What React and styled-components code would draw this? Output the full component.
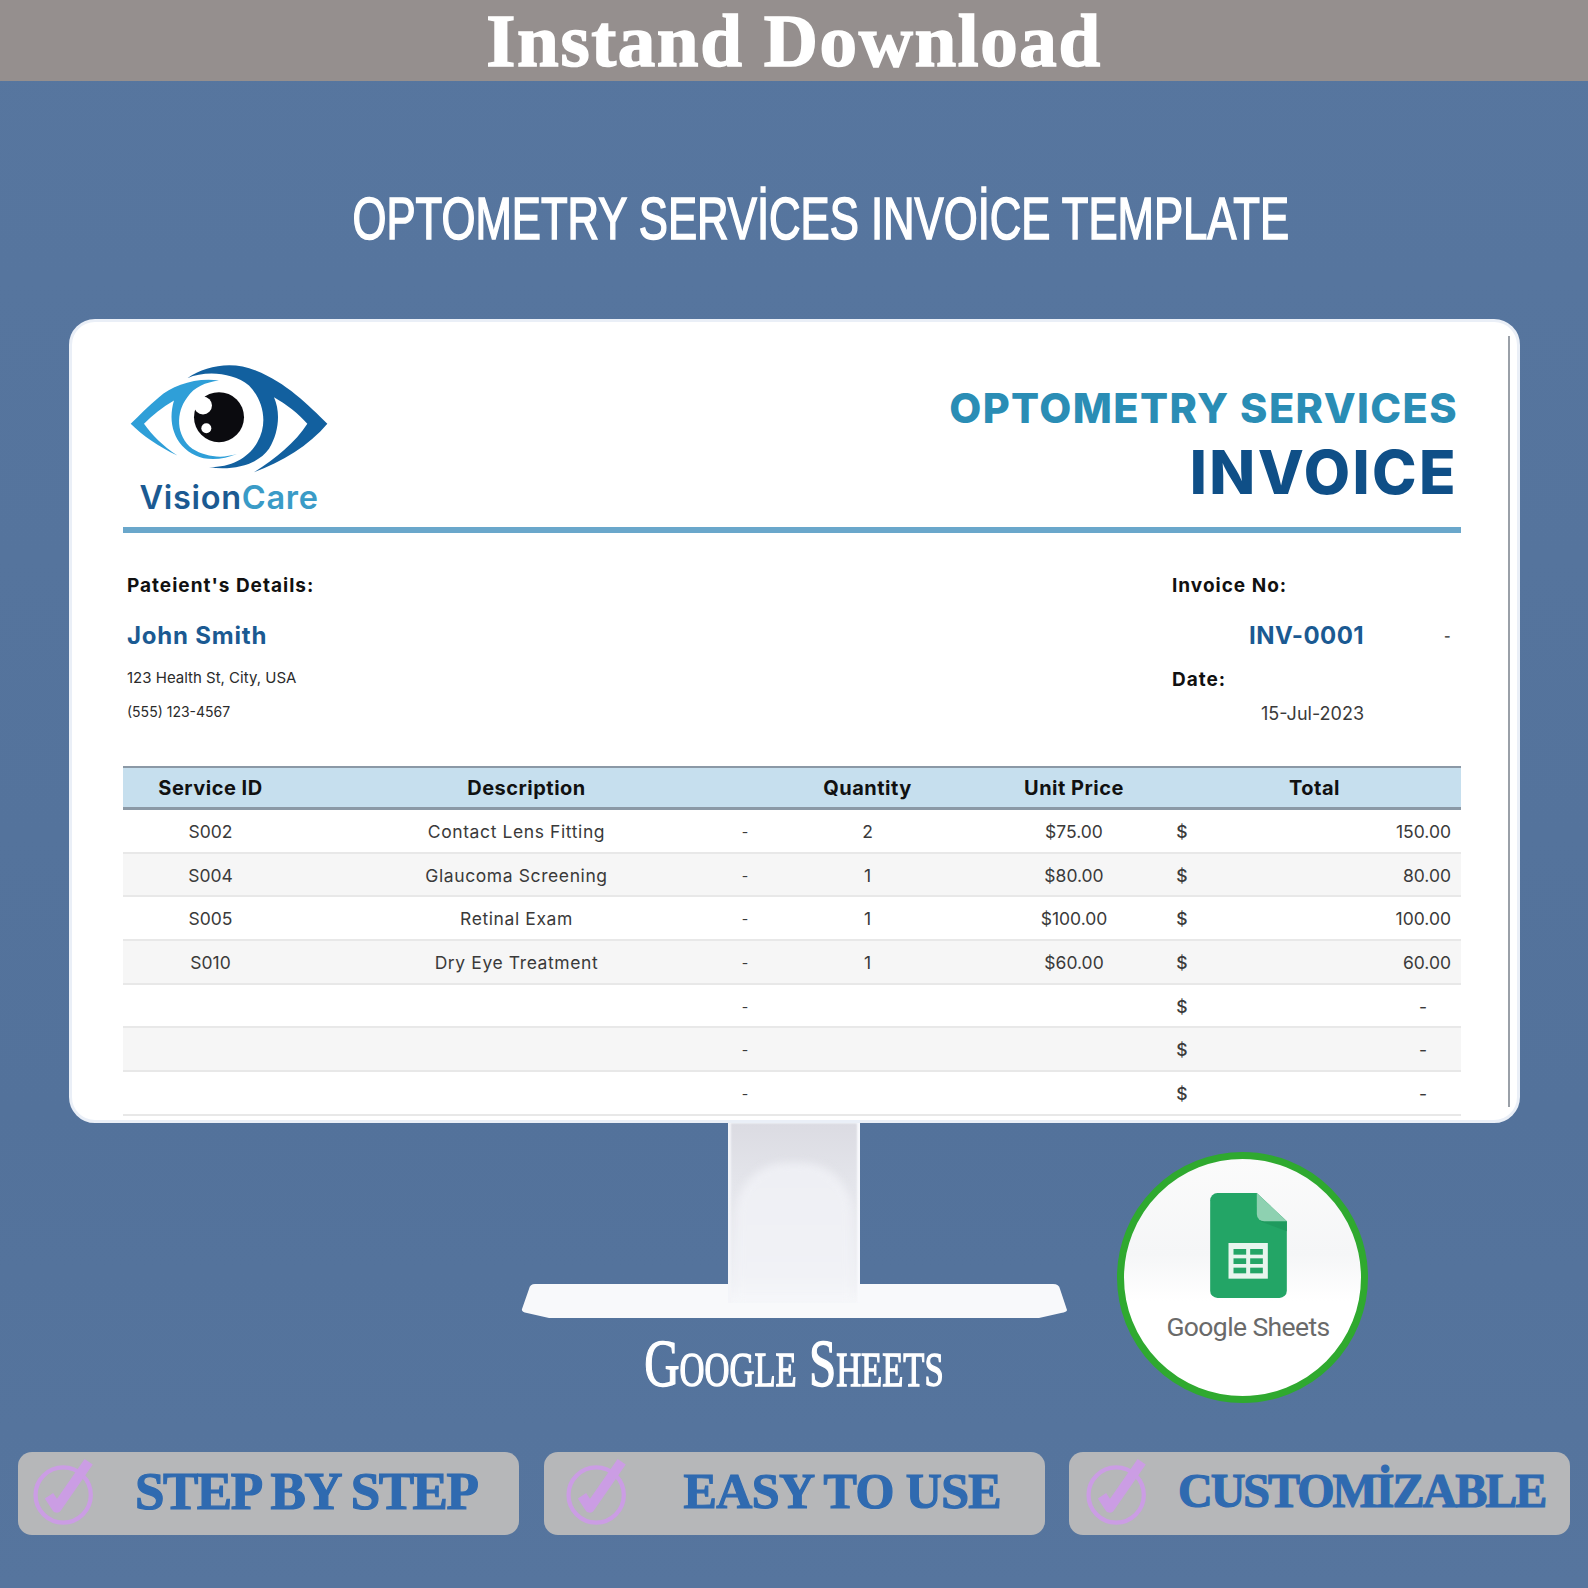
import styled, { createGlobalStyle } from 'styled-components';

const Global = createGlobalStyle`
    html, body {
        margin: 0;
        padding: 0;
    }
    body {
        width: 1588px;
        background: #56759e;
        font-family: "Inter", "Liberation Sans", sans-serif;
    }
`;

const Page = styled.div`
    position: relative;
    width: 1588px;
    height: 1588px;
    overflow: hidden;
    background: linear-gradient(180deg, #57769f 0%, #53729b 70%, #56759e 100%);
`;

const TopBar = styled.div`
    height: 81px;
    background: #958f8e;
    display: flex;
    justify-content: center;
    align-items: center;
`;

const Headline = styled.h1`
    margin: 0;
    color: #fff;
    font-family: "Liberation Serif", serif;
    font-weight: 700;
    font-size: 75px;
    line-height: 81px;
    letter-spacing: 1.6px;
    -webkit-text-stroke: 1.5px #fff;
`;

const TitleRow = styled.div`
    height: 238px;
    box-sizing: border-box;
    padding: 108px 0 0 53px;
    display: flex;
    justify-content: center;
`;

const Title = styled.h2`
    margin: 0;
    height: 60px;
    line-height: 60px;
    color: #fff;
    font-family: "Liberation Sans", sans-serif;
    font-weight: 400;
    font-size: 59px;
    white-space: nowrap;
    transform: scaleX(0.74);
    -webkit-text-stroke: 1.6px #fff;
`;

const Screen = styled.div`
    position: relative;
    box-sizing: border-box;
    margin-left: 69px;
    width: 1451px;
    height: 804px;
    padding: 40px 0 0 51px;
    background: #fff;
    border: 3px solid #eaeff7;
    border-radius: 26px;

    &::after {
        content: "";
        position: absolute;
        top: 14px;
        bottom: 13px;
        right: 7px;
        width: 2px;
        background: #9aa0a8;
    }
`;

const Sheet = styled.div`
    width: 1338px;
`;

const Header = styled.div`
    height: 165px;
    display: flex;
    justify-content: space-between;
    border-bottom: 6px solid #6aa7cb;
`;

const Brand = styled.div`
    width: 210px;
    padding-left: 1px;
    display: flex;
    flex-direction: column;
    align-items: center;
`;

const BrandName = styled.div`
    margin-top: 3px;
    font-size: 32.5px;
    line-height: 42px;
    font-weight: 600;
    letter-spacing: 0.7px;
    color: #1b5a92;
    white-space: nowrap;

    span {
        color: #3a9bc7;
    }
`;

const Heading = styled.div`
    padding: 22px 3px 0 0;
    text-align: right;
`;

const HeadingTop = styled.div`
    font-size: 41.5px;
    line-height: 48px;
    font-weight: 800;
    letter-spacing: 1.4px;
    color: #2a8db5;
    white-space: nowrap;
`;

const HeadingMain = styled.div`
    margin-top: 7px;
    font-size: 60px;
    line-height: 66px;
    font-weight: 800;
    letter-spacing: 2.4px;
    color: #0f4f87;
`;

const Details = styled.div`
    height: 233px;
    box-sizing: border-box;
    padding: 36px 0 0 4px;
    display: flex;
    justify-content: space-between;
`;

const DetailCol = styled.div`
    width: ${(p) => p.$width}px;
`;

const Line = styled.div`
    margin-top: ${(p) => p.$gap || 0}px;
    height: ${(p) => p.$h}px;
    line-height: ${(p) => p.$h}px;
    font-size: ${(p) => p.$size}px;
    font-weight: ${(p) => p.$weight || 400};
    letter-spacing: ${(p) => p.$track || 0}px;
    color: ${(p) => p.$color || '#2b2b2b'};
    white-space: nowrap;
`;

const ValueRow = styled.div`
    margin-top: ${(p) => p.$gap || 0}px;
    display: grid;
    grid-template-columns: 1fr 97px;
    height: ${(p) => p.$h}px;
    line-height: ${(p) => p.$h}px;
    font-size: ${(p) => p.$size}px;
    font-weight: ${(p) => p.$weight || 400};
    letter-spacing: ${(p) => p.$track || 0}px;
    color: ${(p) => p.$color || '#3a3a3a'};
    text-align: right;
`;

const ValueDash = styled.span`
    padding-right: 10px;
    font-size: 14px;
    color: #555;
`;

const TableHead = styled.div`
    display: grid;
    grid-template-columns: 175px 457px 225px 188px 293px;
    box-sizing: border-box;
    height: 44px;
    align-items: center;
    text-align: center;
    background: #c6dfee;
    border-top: 2px solid #8b99a6;
    border-bottom: 3px solid #8b99a6;
    font-size: 20px;
    font-weight: 700;
    letter-spacing: 0.5px;
    color: #111;
`;

const Row = styled.div`
    display: grid;
    grid-template-columns: 175px 437px 20px 225px 188px 28px 265px;
    box-sizing: border-box;
    height: 43.7px;
    padding-top: 1px;
    align-items: center;
    text-align: center;
    font-size: 17.5px;
    color: #3a3a3a;
    background: ${(p) => (p.$shade ? '#f6f6f6' : '#fff')};
    border-bottom: 2px solid #e8e8e8;
`;

const DescCell = styled.span`
    letter-spacing: 0.6px;
`;

const Dash = styled.span`
    font-size: 14px;
`;

const Money = styled.span`
    font-weight: 500;
`;

const TotalCell = styled.span`
    padding-right: ${(p) => (p.$empty ? 34 : 10)}px;
    text-align: right;
`;

const Stage = styled.div`
    height: 329px;
    display: flex;
    flex-direction: column;
    align-items: center;
`;

const Neck = styled.div`
    position: relative;
    z-index: 1;
    width: 132px;
    height: 180px;
    overflow: hidden;
    background: linear-gradient(180deg, #dbdbe2 0%, #e3e4ea 30%, #f0f1f5 90%, #f6f7fa 100%);
    box-shadow: inset 3px 0 2px #f4f5f9, inset -3px 0 2px #f8f9fc;

    &::after {
        content: "";
        position: absolute;
        left: 8px;
        right: 8px;
        top: 40px;
        bottom: 0;
        border-radius: 50px 50px 0 0;
        background: linear-gradient(180deg, #eeeff4 0%, #f1f2f6 80%, #f6f7fa 100%);
        filter: blur(4px);
    }
`;

const Base = styled.svg`
    display: block;
    width: 546px;
    height: 35px;
    margin-top: -20px;
`;

const Caption = styled.div`
    margin-top: 16px;
    height: 58px;
    line-height: 58px;
    color: #fff;
    font-family: "Liberation Serif", serif;
    font-variant: small-caps;
    font-size: 68px;
    white-space: nowrap;
    transform: scaleX(0.72);
    -webkit-text-stroke: 1.4px #fff;
`;

const Round = styled.div`
    position: absolute;
    left: 1117px;
    top: 1152px;
    box-sizing: border-box;
    width: 251px;
    height: 251px;
    border: 7px solid #2fa92f;
    border-radius: 50%;
    background: linear-gradient(180deg, #fbfbfb 0%, #f5f6f7 40%, #fff 60%, #fff 100%);
    display: flex;
    flex-direction: column;
    align-items: center;
`;

const SheetsIcon = styled.svg`
    display: block;
    width: 77px;
    height: 105px;
    margin-top: 34px;
    margin-left: 12px;
`;

const SheetsLabel = styled.div`
    margin-top: 11px;
    margin-left: 11px;
    font-family: "Roboto", "Open Sans", sans-serif;
    font-size: 26.5px;
    line-height: 36px;
    letter-spacing: -0.6px;
    color: #6a6a6a;
    white-space: nowrap;
`;

const Badges = styled.div`
    padding-left: 18px;
    display: grid;
    grid-template-columns: repeat(3, 501px);
    column-gap: 24.5px;
`;

const Badge = styled.div`
    box-sizing: border-box;
    height: 83px;
    padding-left: ${(p) => p.$left}px;
    display: flex;
    align-items: center;
    background: #b6b7b9;
    border-radius: 14px;
`;

const CheckMark = styled.svg`
    flex: none;
    width: 62px;
    height: 70px;
    margin-bottom: 4px;
`;

const BadgeText = styled.span`
    margin: 0 0 6px ${(p) => p.$gap}px;
    color: #2f6ab0;
    font-family: "Liberation Serif", serif;
    font-weight: 700;
    font-size: ${(p) => p.$size}px;
    letter-spacing: ${(p) => p.$track}px;
    white-space: nowrap;
    -webkit-text-stroke: 1.2px #2f6ab0;
`;

function EyeLogo() {
    return (
        <svg width="200" height="112" viewBox="90 60 600 335">
            <path
                fill="#12609f"
                d="M265 108C320 70 400 55 470 85C560 120 630 190 685 245C630 310 550 360 465 390C530 350 590 300 625 245C600 215 560 185 525 165C545 210 540 270 510 320C475 370 400 385 330 375C400 375 450 345 475 300C510 240 490 170 450 130C400 90 320 85 265 108Z"
            />
            <path
                fill="#2f9fd8"
                d="M360 115C290 105 220 130 180 165C150 190 120 220 95 245C130 280 180 315 235 340C190 310 160 280 135 245C160 220 190 195 225 175C205 240 225 310 290 340C320 355 370 355 415 335C370 350 320 345 280 320C230 280 230 210 265 165C285 135 320 120 360 115Z"
            />
            <circle cx="360" cy="225" r="75" fill="#0b0b0f" />
            <circle cx="312" cy="190" r="27" fill="#fff" />
            <circle cx="322" cy="258" r="15" fill="#fff" />
        </svg>
    );
}

function SheetsGlyph() {
    return (
        <SheetsIcon viewBox="0 0 230 315">
            <path
                fill="#23a566"
                d="M22 0H140L230 85V293a22 22 0 0 1-22 22H22a22 22 0 0 1-22-22V22A22 22 0 0 1 22 0Z"
            />
            <path fill="#1f9a5e" d="M150 85H230V115Z" />
            <path fill="#8ed1b1" d="M140 0L230 85H162a22 22 0 0 1-22-22Z" />
            <rect x="55" y="150" width="118" height="107" fill="#e8f5ee" />
            <rect x="70" y="168" width="38" height="17" fill="#23a566" />
            <rect x="120" y="168" width="38" height="17" fill="#23a566" />
            <rect x="70" y="196" width="38" height="17" fill="#23a566" />
            <rect x="120" y="196" width="38" height="17" fill="#23a566" />
            <rect x="70" y="224" width="38" height="17" fill="#23a566" />
            <rect x="120" y="224" width="38" height="17" fill="#23a566" />
        </SheetsIcon>
    );
}

function Check() {
    return (
        <CheckMark viewBox="90 120 175 195">
            <circle cx="178" cy="226" r="78" fill="none" stroke="#cb9de4" strokeWidth="12" />
            <path
                fill="none"
                stroke="#cb9de4"
                strokeWidth="28"
                strokeLinejoin="round"
                d="M138 228L160 262L250 132"
            />
        </CheckMark>
    );
}

const rows = [
    { id: 'S002', desc: 'Contact Lens Fitting', qty: '2', price: '$75.00', total: '150.00' },
    { id: 'S004', desc: 'Glaucoma Screening', qty: '1', price: '$80.00', total: '80.00' },
    { id: 'S005', desc: 'Retinal Exam', qty: '1', price: '$100.00', total: '100.00' },
    { id: 'S010', desc: 'Dry Eye Treatment', qty: '1', price: '$60.00', total: '60.00' },
    {},
    {},
    {},
];

export default function App() {
    return (
        <Page>
            <Global />
            <TopBar>
                <Headline>Instand Download</Headline>
            </TopBar>
            <TitleRow>
                <Title>OPTOMETRY SERVİCES INVOİCE TEMPLATE</Title>
            </TitleRow>
            <Screen>
                <Sheet>
                    <Header>
                        <Brand>
                            <EyeLogo />
                            <BrandName>
                                Vision<span>Care</span>
                            </BrandName>
                        </Brand>
                        <Heading>
                            <HeadingTop>OPTOMETRY SERVICES</HeadingTop>
                            <HeadingMain>INVOICE</HeadingMain>
                        </Heading>
                    </Header>
                    <Details>
                        <DetailCol $width={500}>
                            <Line $h={34} $size={19} $weight={700} $track={1} $color="#111">Pateient's Details:</Line>
                            <Line $h={34} $gap={16} $size={24} $weight={700} $track={0.8} $color="#1b5a92">John Smith</Line>
                            <Line $h={24} $gap={13} $size={15}>123 Health St, City, USA</Line>
                            <Line $h={24} $gap={10} $size={14}>(555) 123-4567</Line>
                        </DetailCol>
                        <DetailCol $width={289}>
                            <Line $h={34} $size={19} $weight={700} $track={1} $color="#111">Invoice No:</Line>
                            <ValueRow $h={34} $gap={16} $size={24} $weight={700} $track={0.4} $color="#1b5a92">
                                <span>INV-0001</span>
                                <ValueDash>-</ValueDash>
                            </ValueRow>
                            <Line $h={28} $gap={13} $size={19} $weight={700} $track={1} $color="#111">Date:</Line>
                            <ValueRow $h={28} $gap={6} $size={18}>
                                <span>15-Jul-2023</span>
                            </ValueRow>
                        </DetailCol>
                    </Details>
                    <TableHead>
                        <span>Service ID</span>
                        <span>Description</span>
                        <span>Quantity</span>
                        <span>Unit Price</span>
                        <span>Total</span>
                    </TableHead>
                    {rows.map((r, i) => (
                        <Row key={i} $shade={i % 2 === 1}>
                            <span>{r.id}</span>
                            <DescCell>{r.desc}</DescCell>
                            <Dash>-</Dash>
                            <span>{r.qty}</span>
                            <span>{r.price}</span>
                            <Money>$</Money>
                            <TotalCell $empty={!r.total}>{r.total || '-'}</TotalCell>
                        </Row>
                    ))}
                </Sheet>
            </Screen>
            <Stage>
                <Neck />
                <Base viewBox="0 0 546 35">
                    <path
                        fill="#f8f9fb"
                        d="M14 1H532Q538 1 539 6L546 27Q546 29 540 30L518 35H28L6 30Q0 29 1 26L8 6Q9 1 14 1Z"
                    />
                </Base>
                <Caption>Google Sheets</Caption>
            </Stage>
            <Round>
                <SheetsGlyph />
                <SheetsLabel>Google Sheets</SheetsLabel>
            </Round>
            <Badges>
                <Badge $left={14}>
                    <Check />
                    <BadgeText $gap={41} $size={53} $track={-1.5}>STEP BY STEP</BadgeText>
                </Badge>
                <Badge $left={21}>
                    <Check />
                    <BadgeText $gap={57} $size={50} $track={-0.6}>EASY TO USE</BadgeText>
                </Badge>
                <Badge $left={16}>
                    <Check />
                    <BadgeText $gap={31} $size={48} $track={-2}>CUSTOMİZABLE</BadgeText>
                </Badge>
            </Badges>
        </Page>
    );
}
